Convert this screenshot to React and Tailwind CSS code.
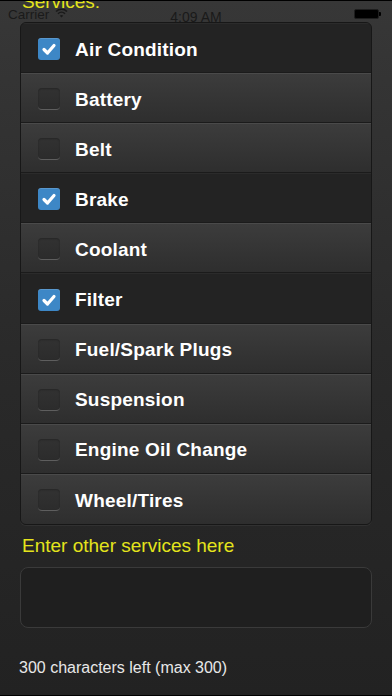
import React from "react";

const items = [
  ["Air Condition", true],
  ["Battery", false],
  ["Belt", false],
  ["Brake", true],
  ["Coolant", false],
  ["Filter", true],
  ["Fuel/Spark Plugs", false],
  ["Suspension", false],
  ["Engine Oil Change", false],
  ["Wheel/Tires", false],
];

function Check({ checked }) {
  if (checked) {
    return (
      <div className="w-[22px] h-[22px] rounded-[3px] bg-[#3d87c6] flex items-center justify-center shadow-[inset_0_1px_0_rgba(255,255,255,0.15)]">
        <svg width="16" height="16" viewBox="0 0 16 16">
          <path d="M3 8.5 L6.5 12 L13 4.5" fill="none" stroke="white" strokeWidth="3.2" strokeLinecap="round" strokeLinejoin="round" />
        </svg>
      </div>
    );
  }
  return (
    <div className="w-[22px] h-[22px] rounded-[4px] bg-[rgba(0,0,0,0.1)] border-b-[1.5px] border-[#5e5e5e] shadow-[inset_0_1px_2px_rgba(0,0,0,0.25)]" />
  );
}

function Row({ label, checked, last }) {
  const bg = checked
    ? "bg-[#232323] border-t border-[#2b2b2b]"
    : "bg-gradient-to-b from-[#3c3c3c] to-[#2e2e2e] border-t border-[#4a4a4a]";
  return (
    <div className={`h-[50.1px] flex items-center pl-[17px] pt-[2px] ${bg} ${last ? "" : "border-b border-b-[#1b1b1b]"}`}>
      <Check checked={checked} />
      <span className="ml-[15px] text-white font-bold text-[19px] leading-none tracking-[0.2px]">{label}</span>
    </div>
  );
}

export default function App() {
  return (
    <div
      className="relative w-[392px] h-[696px] overflow-hidden bg-gradient-to-b from-[#373737] via-[#2a2a2a] to-[#222222] border-t border-b border-black"
      style={{ fontFamily: '"Liberation Sans", Arial, sans-serif' }}
    >
      <div className="absolute top-[4px] left-0 right-0 h-[20px] flex items-center px-[8px] text-[#1a1a1a] text-[13.5px] z-10">
        <span>Carrier</span>
        <svg className="ml-[6px] -mt-[4px]" width="13" height="10" viewBox="0 0 13 10">
          <path d="M1 3.5 A8 8 0 0 1 12 3.5" fill="none" stroke="#1a1a1a" strokeWidth="1.6" />
          <path d="M3 5.7 A5 5 0 0 1 10 5.7" fill="none" stroke="#1a1a1a" strokeWidth="1.6" />
          <path d="M6.5 9.5 L4.8 7.7 A2.5 2.5 0 0 1 8.2 7.7 Z" fill="#1a1a1a" />
        </svg>
        <span className="absolute left-1/2 -translate-x-1/2 top-[2px] text-[14px]">4:09 AM</span>
        <div className="absolute right-[11px] top-[4px] flex items-center">
          <div className="w-[25px] h-[10px] rounded-[2px] bg-black border border-[#1e1e1e]" />
          <div className="w-[2px] h-[4px] bg-black rounded-r-[1px]" />
        </div>
      </div>

      <div className="px-[20px]">
        <div className="-mt-[9px] text-[19px] leading-[20px] text-[#e4e41c] pl-[2px]">Services:</div>
        <div className="mt-[10px] rounded-[6px] border border-[#171717] overflow-hidden bg-[#232323] shadow-[0_1px_0_rgba(255,255,255,0.05)]">
          {items.map(([l, c], i) => (
            <Row key={l} label={l} checked={c} last={i === items.length - 1} />
          ))}
        </div>
        <div className="mt-[10px] text-[19px] leading-[22px] text-[#e4e41c] pl-[2px]">Enter other services here</div>
        <div className="mt-[10px] h-[61px] rounded-[8px] border border-[#3a3a3a] bg-[#1f1f1f]" />
        <div className="mt-[30px] -ml-[1px] text-[16px] leading-[20px] text-[#e8e8e8]">300 characters left (max 300)</div>
      </div>
    </div>
  );
}
